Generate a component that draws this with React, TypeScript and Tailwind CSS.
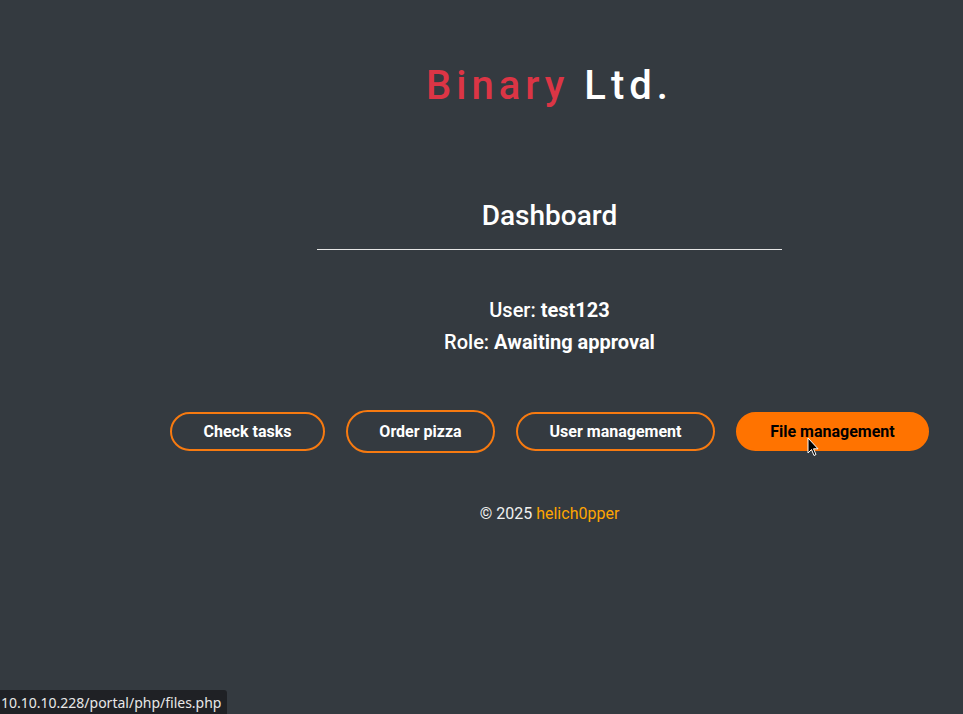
import React from 'react';

const BUTTONS = [
  { label: 'Check tasks', w: 'w-[155px] h-[39px]', active: false },
  { label: 'Order pizza', w: 'w-[149px] h-[43px]', active: false },
  { label: 'User management', w: 'w-[199px] h-[39px]', active: false },
  { label: 'File management', w: 'w-[193px] h-[39px]', active: true },
];

export default function App() {
  return (
    <div className="relative min-h-[714px] h-[714px] overflow-hidden bg-[#343a40] text-white font-['Roboto',sans-serif]">
      <div className="pl-[136px] flex flex-col items-center">
        <h1 className="mt-[60px] text-[40px] leading-[52px] tracking-[5px] font-medium">
          <span className="text-[#dc3545]">Binary</span> Ltd.
        </h1>

        <h2 className="mt-[87px] text-[28px] leading-[34px] font-medium">Dashboard</h2>
        <div className="mt-[16px] w-[465px] h-px bg-[#e6e6e6]" />

        <div className="mt-[44px] flex flex-col items-center text-[20px] leading-[32px] font-medium">
          <p>User: <b className="font-bold">test123</b></p>
          <p>Role: <b className="font-bold">Awaiting approval</b></p>
        </div>

        <div className="mt-[52px] flex items-center gap-[21px]">
          {BUTTONS.map(b => (
            <button
              key={b.label}
              className={`${b.w} rounded-full text-[16px] font-bold border-2 ${
                b.active ? 'bg-[#ff7300] border-[#ff7300] text-black' : 'border-[#f77a10] text-white'
              }`}
            >
              {b.label}
            </button>
          ))}
        </div>

        <p className="mt-[49px] text-[16px] leading-[24px] text-[#f0f0f0]">
          © 2025 <span className="text-[#ffa500]">helich0pper</span>
        </p>
      </div>

      <svg className="absolute left-[807px] top-[437px]" width="12" height="20" viewBox="0 0 12 20">
        <path d="M1 1 L1 16 L4.5 12.5 L7 18.5 L9 17.5 L6.5 11.8 L11 11.8 Z" fill="#000" stroke="#fff" strokeWidth="1" />
      </svg>

      <div className="absolute left-0 bottom-0 h-[24px] pl-[1px] pr-[6px] flex items-center bg-[#1f2125] rounded-tr-[3px] text-[#e8e8e8] text-[14px] font-['Noto_Sans',sans-serif]">
        10.10.10.228/portal/php/files.php
      </div>
    </div>
  );
}
